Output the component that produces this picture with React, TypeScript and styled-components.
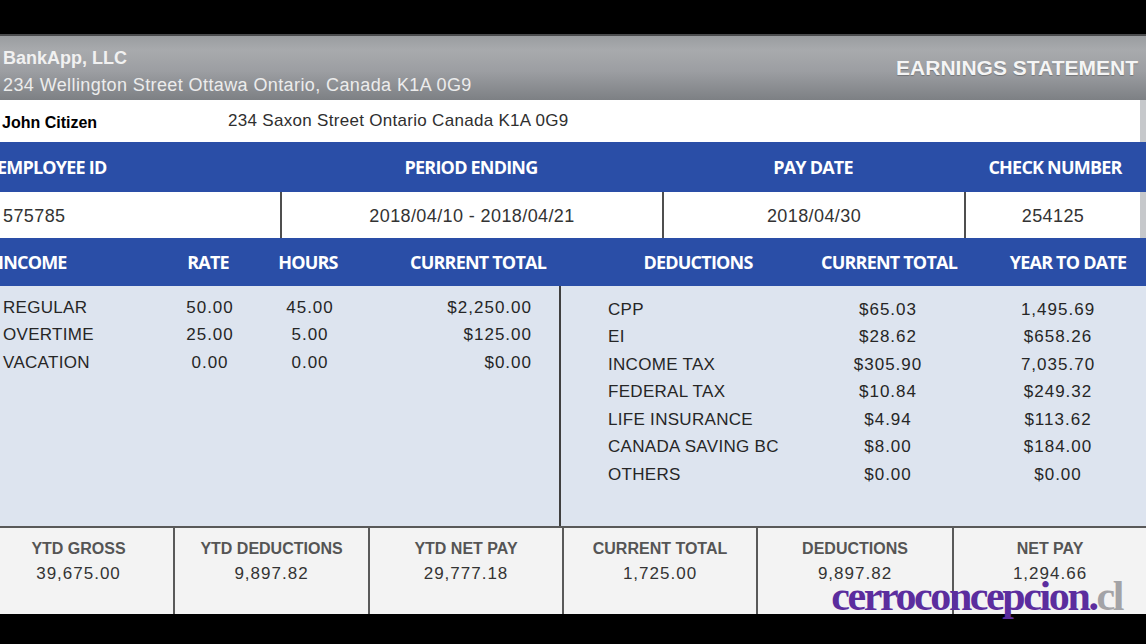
import React from "react";
import styled, { createGlobalStyle } from "styled-components";

const GlobalStyle = createGlobalStyle`
  html, body {
    margin: 0;
    padding: 0;
    background: #000;
  }
  body {
    font-family: "Liberation Sans", Arial, sans-serif;
  }
`;

const Page = styled.div`
  position: relative;
  width: 1146px;
  height: 644px;
  display: flex;
  flex-direction: column;
  background: #000;
  overflow: hidden;
`;

const BlackBand = styled.div<{ $h: number }>`
  height: ${(p) => p.$h}px;
  flex-shrink: 0;
  background: #000;
`;

const Sheet = styled.div`
  display: flex;
  flex-direction: column;
  background: #c6c8cb;
`;

const Letterhead = styled.header`
  height: 66px;
  box-sizing: border-box;
  border-top: 2px solid #4b4c4e;
  background: linear-gradient(
    to bottom,
    #9a9da0 0%,
    #a8aaad 22%,
    #9c9ea2 55%,
    #7d8084 100%
  );
  display: flex;
  justify-content: space-between;
  align-items: center;
  padding: 0 8px 0 3px;
  color: #f3f3f3;
`;

const Company = styled.div`
  display: flex;
  flex-direction: column;
  gap: 5px;
  padding-top: 6px;
`;

const CompanyName = styled.div`
  font-size: 18px;
  font-weight: 700;
  line-height: 22px;
  color: #f1f1f1;
`;

const CompanyAddress = styled.div`
  font-size: 18px;
  line-height: 22px;
  letter-spacing: 0.4px;
  color: #ececec;
`;

const Title = styled.h1`
  margin: 0;
  font-size: 21px;
  font-weight: 700;
  line-height: 24px;
  color: #f5f5f5;
  text-shadow: 0 1px 1px rgba(0, 0, 0, 0.25);
`;

const Recipient = styled.div`
  height: 42px;
  margin-right: 6px;
  display: grid;
  grid-template-columns: 226px 1fr;
  align-items: center;
  padding-left: 2px;
  background: #fff;
`;

const RecipientName = styled.div`
  font-size: 16px;
  font-weight: 700;
  color: #000;
  padding-top: 3px;
`;

const RecipientAddress = styled.div`
  font-size: 17px;
  letter-spacing: 0.3px;
  color: #2f2f2f;
`;

const HeadRow = styled.div<{ $cols: string; $h: number }>`
  height: ${(p) => p.$h}px;
  display: grid;
  grid-template-columns: ${(p) => p.$cols};
  align-items: center;
  background: #2a4ea7;
`;

const HeadCell = styled.div<{ $align?: "left" | "center"; $pad?: number }>`
  text-align: ${(p) => p.$align ?? "center"};
  padding-left: ${(p) => p.$pad ?? 0}px;
  font-family: "Open Sans", "Liberation Sans", sans-serif;
  font-size: 18px;
  font-weight: 700;
  letter-spacing: -0.8px;
  color: #fff;
  white-space: nowrap;
`;

const ValueRow = styled.div`
  height: 46px;
  margin-right: 6px;
  display: grid;
  grid-template-columns: 280px 382px 302px 1fr;
  background: #fff;
`;

const ValueCell = styled.div<{ $align?: "left" | "center" }>`
  display: flex;
  align-items: center;
  justify-content: ${(p) => (p.$align === "left" ? "flex-start" : "center")};
  padding: 3px 0 0 ${(p) => (p.$align === "left" ? 3 : 0)}px;
  font-size: 18px;
  letter-spacing: 0.4px;
  color: #333;
  & + & {
    border-left: 2px solid #4f4f4f;
  }
`;

const Body = styled.div`
  height: 242px;
  box-sizing: border-box;
  display: grid;
  grid-template-columns: 561px 1fr;
  background: #dde4ef;
  border-bottom: 2px solid #595959;
`;

const Panel = styled.div<{ $top: number; $left: number; $divider?: boolean }>`
  padding: ${(p) => p.$top}px 0 0 ${(p) => p.$left}px;
  border-right: ${(p) => (p.$divider ? "2px solid #3f3f3f" : "none")};
`;

const Line = styled.div<{ $cols: string }>`
  display: grid;
  grid-template-columns: ${(p) => p.$cols};
  height: 27.5px;
  align-items: center;
  font-size: 17px;
  color: #262626;
`;

const Cell = styled.div<{ $align?: "left" | "center" | "right"; $padRight?: number }>`
  text-align: ${(p) => p.$align ?? "left"};
  padding-right: ${(p) => p.$padRight ?? 0}px;
  letter-spacing: ${(p) => (p.$align && p.$align !== "left" ? "1px" : "0.3px")};
  white-space: nowrap;
`;

const Summary = styled.div`
  height: 86px;
  display: grid;
  grid-template-columns: 173px 195px 194px 194px 196px 1fr;
  background: #f3f3f3;
`;

const SummaryCell = styled.div`
  display: flex;
  flex-direction: column;
  align-items: center;
  padding-top: 10px;
  &:first-child {
    padding-right: 16px;
  }
  & + & {
    border-left: 2px solid #595959;
  }
`;

const SummaryLabel = styled.div`
  font-size: 16px;
  font-weight: 700;
  line-height: 22px;
  color: #555;
`;

const SummaryValue = styled.div`
  font-size: 17px;
  line-height: 26px;
  padding-top: 1px;
  letter-spacing: 1px;
  color: #333;
`;

const Watermark = styled.div`
  position: absolute;
  right: 24px;
  top: 575px;
  font-family: "Liberation Serif", "Times New Roman", serif;
  font-size: 42px;
  font-weight: 700;
  line-height: 1;
  letter-spacing: -2.4px;
  color: #5b2d9e;
`;

const Domain = styled.span`
  color: #a3a3a6;
`;

const income = [
  ["REGULAR", "50.00", "45.00", "$2,250.00"],
  ["OVERTIME", "25.00", "5.00", "$125.00"],
  ["VACATION", "0.00", "0.00", "$0.00"],
];

const deductions = [
  ["CPP", "$65.03", "1,495.69"],
  ["EI", "$28.62", "$658.26"],
  ["INCOME TAX", "$305.90", "7,035.70"],
  ["FEDERAL TAX", "$10.84", "$249.32"],
  ["LIFE INSURANCE", "$4.94", "$113.62"],
  ["CANADA SAVING BC", "$8.00", "$184.00"],
  ["OTHERS", "$0.00", "$0.00"],
];

const totals = [
  ["YTD GROSS", "39,675.00"],
  ["YTD DEDUCTIONS", "9,897.82"],
  ["YTD NET PAY", "29,777.18"],
  ["CURRENT TOTAL", "1,725.00"],
  ["DEDUCTIONS", "9,897.82"],
  ["NET PAY", "1,294.66"],
];

export default function App() {
  return (
    <Page>
      <GlobalStyle />
      <BlackBand $h={34} />
      <Sheet>
        <Letterhead>
          <Company>
            <CompanyName>BankApp, LLC</CompanyName>
            <CompanyAddress>
              234 Wellington Street Ottawa Ontario, Canada K1A 0G9
            </CompanyAddress>
          </Company>
          <Title>EARNINGS STATEMENT</Title>
        </Letterhead>

        <Recipient>
          <RecipientName>John Citizen</RecipientName>
          <RecipientAddress>234 Saxon Street Ontario Canada K1A 0G9</RecipientAddress>
        </Recipient>

        <HeadRow $cols="280px 382px 302px 1fr" $h={50}>
          <HeadCell $align="left" style={{ marginLeft: -3 }}>
            EMPLOYEE ID
          </HeadCell>
          <HeadCell>PERIOD ENDING</HeadCell>
          <HeadCell>PAY DATE</HeadCell>
          <HeadCell>CHECK NUMBER</HeadCell>
        </HeadRow>

        <ValueRow>
          <ValueCell $align="left">575785</ValueCell>
          <ValueCell>2018/04/10 - 2018/04/21</ValueCell>
          <ValueCell>2018/04/30</ValueCell>
          <ValueCell>254125</ValueCell>
        </ValueRow>

        <HeadRow $cols="158px 100px 100px 240px 200px 182px 1fr" $h={48}>
          <HeadCell $align="left" style={{ marginLeft: -2 }}>
            INCOME
          </HeadCell>
          <HeadCell>RATE</HeadCell>
          <HeadCell>HOURS</HeadCell>
          <HeadCell>CURRENT TOTAL</HeadCell>
          <HeadCell>DEDUCTIONS</HeadCell>
          <HeadCell>CURRENT TOTAL</HeadCell>
          <HeadCell $pad={10}>YEAR TO DATE</HeadCell>
        </HeadRow>

        <Body>
          <Panel $top={8} $left={3} $divider>
            {income.map(([label, rate, hours, total]) => (
              <Line key={label} $cols="157px 100px 100px 1fr">
                <Cell>{label}</Cell>
                <Cell $align="center">{rate}</Cell>
                <Cell $align="center">{hours}</Cell>
                <Cell $align="right" $padRight={27}>
                  {total}
                </Cell>
              </Line>
            ))}
          </Panel>
          <Panel $top={10} $left={47}>
            {deductions.map(([label, current, ytd]) => (
              <Line key={label} $cols="190px 180px 160px">
                <Cell>{label}</Cell>
                <Cell $align="center">{current}</Cell>
                <Cell $align="center">{ytd}</Cell>
              </Line>
            ))}
          </Panel>
        </Body>

        <Summary>
          {totals.map(([label, value]) => (
            <SummaryCell key={label}>
              <SummaryLabel>{label}</SummaryLabel>
              <SummaryValue>{value}</SummaryValue>
            </SummaryCell>
          ))}
        </Summary>
      </Sheet>
      <BlackBand $h={30} />

      <Watermark>
        cerroconcepcion.<Domain>cl</Domain>
      </Watermark>
    </Page>
  );
}
